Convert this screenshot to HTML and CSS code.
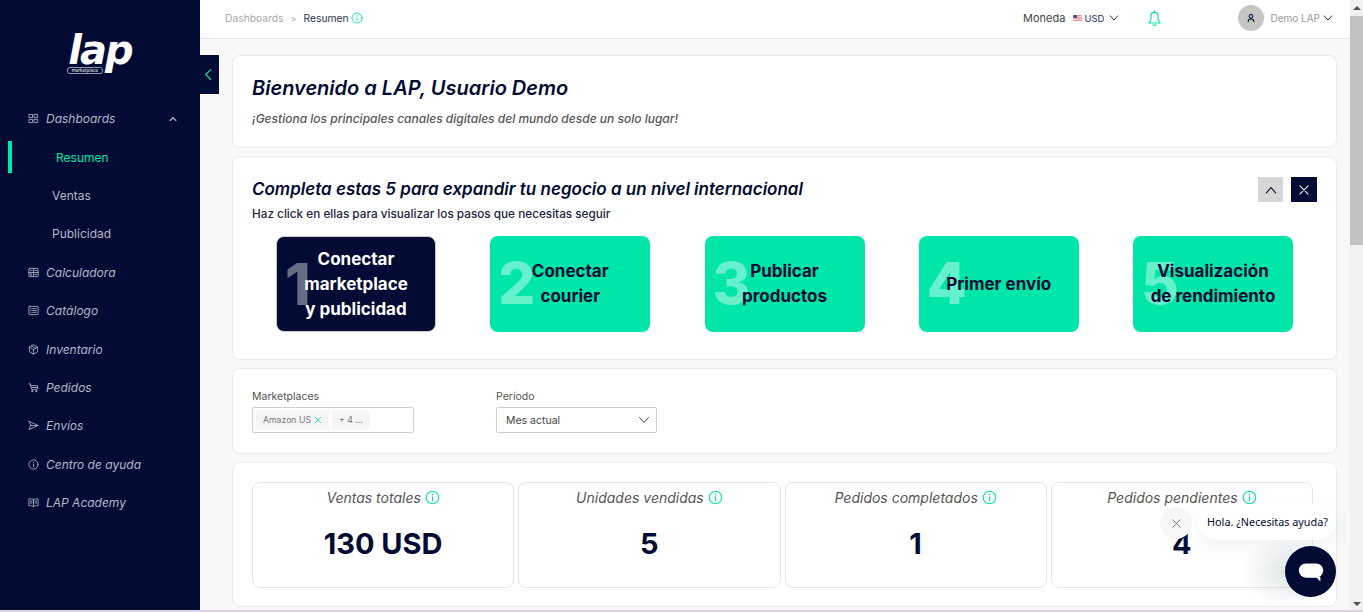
FILE: index.html
```html
<!DOCTYPE html>
<html lang="es">

<head>
    <meta charset="UTF-8">
    <meta name="viewport" content="width=device-width, initial-scale=1.0">
    <title>LAP - Resumen</title>

    <link rel="stylesheet" href="styles.css">
</head>

<body>
    <svg class="defs" width="0" height="0">
        <symbol id="info" viewBox="0 0 24 24"><circle cx="12" cy="12" r="10"/><path d="M12 11v6M12 7v1"/></symbol>
        <symbol id="chev" viewBox="0 0 24 24"><path d="M3 7l9 10 9-10"/></symbol>
    </svg>

    <aside class="sidebar">
        <div class="logo">
            <div class="logo-text">lap</div>
            <div class="logo-sub">marketplace</div>
        </div>
        <nav class="menu">
            <div class="item">
                <svg class="ico" viewBox="0 0 24 24"><rect x="3" y="3" width="7" height="7"/><rect x="14" y="3" width="7" height="7"/><rect x="3" y="14" width="7" height="7"/><rect x="14" y="14" width="7" height="7"/></svg>
                <span>Dashboards</span>
                <svg class="caret" viewBox="0 0 24 24"><path d="M5 16l7-7 7 7"/></svg>
            </div>
            <div class="sub active">Resumen</div>
            <div class="sub">Ventas</div>
            <div class="sub">Publicidad</div>
            <div class="item">
                <svg class="ico" viewBox="0 0 24 24"><rect x="2" y="3" width="20" height="18" rx="1"/><path d="M2 12h20M12 3v18M5 7.500h4M15 7.500h4M15 16.500h4M5 15l3 3M8 15l-3 3"/></svg>
                <span>Calculadora</span>
            </div>
            <div class="item">
                <svg class="ico" viewBox="0 0 24 24"><rect x="2" y="3" width="20" height="18" rx="1"/><path d="M10 8h8M10 12h8M10 16h8M6 8h1M6 12h1M6 16h1"/></svg>
                <span>Catálogo</span>
            </div>
            <div class="item">
                <svg class="ico" viewBox="0 0 24 24"><path d="M12 2l9 5v10l-9 5-9-5V7zM3 7l9 5 9-5M12 12v10M7.500 4.500l9 5"/></svg>
                <span>Inventario</span>
            </div>
            <div class="item">
                <svg class="ico" viewBox="0 0 24 24"><path d="M2 4h3l3 12h12l1-8H6M8 12h13"/><circle cx="9" cy="20" r="1.500"/><circle cx="18" cy="20" r="1.500"/></svg>
                <span>Pedidos</span>
            </div>
            <div class="item">
                <svg class="ico" viewBox="0 0 24 24"><path d="M2 3l20 9-20 9 4-9zM6 12h16"/></svg>
                <span>Envíos</span>
            </div>
            <div class="item">
                <svg class="ico" viewBox="0 0 24 24"><circle cx="12" cy="12" r="10"/><path d="M12 11v6M12 7v1"/></svg>
                <span>Centro de ayuda</span>
            </div>
            <div class="item">
                <svg class="ico" viewBox="0 0 24 24"><path d="M12 6c-2-2-6-2-10-2v15c4 0 8 0 10 2 2-2 6-2 10-2V4c-4 0-8 0-10 2zM12 6v15M5 9h4M5 13h4M15 9h4M15 13h4"/></svg>
                <span>LAP Academy</span>
            </div>
        </nav>
    </aside>

    <div class="toggle">
        <svg viewBox="0 0 24 24"><path d="M16 3l-9 9 9 9"/></svg>
    </div>

    <div class="page">
        <header class="topbar">
            <div class="crumbs">
                <span class="crumb-off">Dashboards</span>
                <span class="crumb-sep">&gt;</span>
                <span class="crumb-on">Resumen</span>
                <svg class="info small"><use href="#info"/></svg>
            </div>
            <div class="currency">
                <span class="cur-label">Moneda</span>
                <svg class="flag" viewBox="0 0 10 7"><rect width="10" height="7" fill="#e8808c"/><path d="M0 1.500h10M0 3.500h10M0 5.500h10"/><rect width="4.500" height="3.500" fill="#4a5590"/></svg>
                <span class="cur-code">USD</span>
                <svg class="chev"><use href="#chev"/></svg>
            </div>
            <svg class="bell" viewBox="0 0 24 24"><path d="M4 19c2-2 3-3 3-6V9a5 5 0 0 1 10 0v4c0 3 1 4 3 6zM10 22h4M12 4V2"/></svg>
            <div class="user">
                <div class="avatar">
                    <svg viewBox="0 0 24 24"><circle cx="12" cy="8" r="4.500"/><path d="M5 21c0-9 14-9 14 0"/></svg>
                </div>
                <span class="user-name">Demo LAP</span>
                <svg class="chev"><use href="#chev"/></svg>
            </div>
        </header>

        <main class="content">
            <section class="card welcome">
                <h1>Bienvenido a LAP, Usuario Demo</h1>
                <p>¡Gestiona los principales canales digitales del mundo desde un solo lugar!</p>
            </section>

            <section class="card steps">
                <div class="steps-head">
                    <div>
                        <h2>Completa estas 5 para expandir tu negocio a un nivel internacional</h2>
                        <p>Haz click en ellas para visualizar los pasos que necesitas seguir</p>
                    </div>
                    <div class="steps-btns">
                        <div class="sq-btn up"><svg viewBox="0 0 24 24"><path d="M4 17l8-9 8 9"/></svg></div>
                        <div class="sq-btn close"><svg viewBox="0 0 24 24"><path d="M5 5l14 14M19 5L5 19"/></svg></div>
                    </div>
                </div>
                <div class="step-row">
                    <div class="step dark"><span class="num">1</span><span class="lbl">Conectar<br>marketplace<br>y publicidad</span></div>
                    <div class="step"><span class="num">2</span><span class="lbl">Conectar<br>courier</span></div>
                    <div class="step"><span class="num">3</span><span class="lbl">Publicar<br>productos</span></div>
                    <div class="step"><span class="num">4</span><span class="lbl">Primer envío</span></div>
                    <div class="step"><span class="num">5</span><span class="lbl">Visualización<br>de rendimiento</span></div>
                </div>
            </section>

            <section class="card filters">
                <div class="field market">
                    <label>Marketplaces</label>
                    <div class="box">
                        <span class="tag">Amazon US <svg viewBox="0 0 24 24"><path d="M4 4l16 16M20 4L4 20"/></svg></span>
                        <span class="tag">+ 4 ...</span>
                    </div>
                </div>
                <div class="field period">
                    <label>Período</label>
                    <div class="box select">
                        <span>Mes actual</span>
                        <svg class="chev"><use href="#chev"/></svg>
                    </div>
                </div>
            </section>

            <section class="card stats">
                <div class="stat">
                    <div class="stat-title">Ventas totales <svg class="info"><use href="#info"/></svg></div>
                    <div class="stat-value">130 USD</div>
                </div>
                <div class="stat">
                    <div class="stat-title">Unidades vendidas <svg class="info"><use href="#info"/></svg></div>
                    <div class="stat-value">5</div>
                </div>
                <div class="stat">
                    <div class="stat-title">Pedidos completados <svg class="info"><use href="#info"/></svg></div>
                    <div class="stat-value">1</div>
                </div>
                <div class="stat">
                    <div class="stat-title">Pedidos pendientes <svg class="info"><use href="#info"/></svg></div>
                    <div class="stat-value">4</div>
                </div>
            </section>
        </main>
    </div>

    <div class="scrollbar">
        <div class="arrow-up"></div>
        <div class="thumb"></div>
        <div class="track"></div>
        <div class="arrow-down"></div>
    </div>

    <div class="chat">
        <div class="chat-glow"></div>
        <div class="chat-x"><svg viewBox="0 0 24 24"><path d="M5 5l14 14M19 5L5 19"/></svg></div>
        <div class="chat-msg">Hola. ¿Necesitas ayuda?</div>
        <div class="chat-btn">
            <svg viewBox="0 0 32 32"><rect x="3" y="7" width="26" height="15" rx="7.500" fill="#fff"/><path d="M21 21h5v5z" fill="#fff"/></svg>
        </div>
    </div>
</body>

</html>
```

FILE: styles.css
```css
* {
    box-sizing: border-box;
}

html,
body {
    height: 100%;
    margin: 0;
}

body {
    display: flex;
    overflow: hidden;
    position: relative;
    font-family: "Inter", "Liberation Sans", sans-serif;
    color: #010b33;
    background-color: #f8f8f8;
}

/* thin line along the bottom of the window */
body::after {
    content: "";
    position: absolute;
    left: 0;
    right: 0;
    bottom: 0;
    height: 2px;
    background-color: #e2d3e4;
}

svg {
    fill: none;
    stroke: currentColor;
    stroke-linecap: round;
    stroke-linejoin: round;
}

.defs {
    position: absolute;
}

/* sidebar */
.sidebar {
    width: 200px;
    flex-shrink: 0;
    background-color: #010b33;
    color: #b4b8c8;
}

.logo {
    height: 99.600px;
    padding-top: 35px;
    display: flex;
    flex-direction: column;
    align-items: center;
    color: #fff;
}

.logo-text {
    font-family: "DejaVu Sans", sans-serif;
    font-size: 40px;
    line-height: 30px;
    font-weight: 700;
    font-style: italic;
    letter-spacing: -2px;
}

.logo-sub {
    font-size: 4.500px;
    line-height: 5px;
    margin-left: -30px;
    margin-top: 2px;
    padding: 0 4px;
    border: 1px solid #99a;
    border-radius: 3px;
}

.item,
.sub {
    height: 38.400px;
    display: flex;
    align-items: center;
    font-size: 12px;
}

.item {
    padding-left: 28px;
    font-style: italic;
}

.ico {
    width: 11px;
    height: 11px;
    margin-right: 7px;
    stroke-width: 1.800;
}

.caret {
    width: 10px;
    height: 10px;
    margin-left: auto;
    margin-right: 22px;
    stroke-width: 3;
}

.sub {
    padding-left: 52px;
}

.sub.active {
    padding-left: 56px;
    color: #00e6a8;
    position: relative;
}

.sub.active::before {
    content: "";
    position: absolute;
    left: 8px;
    top: 3px;
    width: 4px;
    height: 32px;
    background-color: #00e6a8;
}

.toggle {
    position: absolute;
    left: 200px;
    top: 55px;
    width: 19px;
    height: 39px;
    background-color: #010b33;
    color: #00e6a8;
    display: flex;
    align-items: center;
    justify-content: center;
}

.toggle svg {
    width: 13px;
    height: 13px;
    margin-left: -3px;
    stroke-width: 2.200;
}

/* header */
.page {
    flex: 1;
    min-width: 0;
    display: flex;
    flex-direction: column;
}

.topbar {
    height: 39px;
    flex-shrink: 0;
    background-color: #fff;
    border-bottom: 1px solid #e8e8e8;
    display: flex;
    align-items: center;
    padding: 0 17px 2px 25px;
    font-size: 10.300px;
}

.crumbs {
    display: flex;
    align-items: center;
    flex: 1;
}

.crumb-off {
    color: #aaa;
}

.crumb-sep {
    color: #aaa;
    margin: 0 7px;
    font-size: 9px;
}

.crumb-on {
    color: #2b3358;
}

.info {
    width: 15px;
    height: 15px;
    color: #00e6a8;
    stroke-width: 1.800;
    vertical-align: -2px;
}

.info.small {
    width: 12px;
    height: 12px;
    margin-left: 2px;
}

.currency {
    display: flex;
    align-items: center;
}

.cur-label {
    font-size: 11px;
    color: #444;
}

.flag {
    width: 9px;
    height: 6px;
    margin: 0 2px 0 8px;
    stroke: #fbe4e6;
    stroke-width: 1;
}

.flag rect {
    stroke: none;
}

.cur-code {
    font-size: 9.500px;
    color: #2b3358;
}

.chev {
    width: 10px;
    height: 10px;
    margin-left: 5px;
    stroke-width: 2;
}

.bell {
    width: 17px;
    height: 18px;
    margin: 0 75px 0 27px;
    color: #00e6a8;
    stroke-width: 1.600;
}

.user {
    display: flex;
    align-items: center;
}

.user .chev {
    margin-left: 3px;
}

.avatar {
    width: 26px;
    height: 26px;
    border-radius: 50%;
    background-color: #c6c6c6;
    display: flex;
    align-items: center;
    justify-content: center;
    margin-right: 6px;
}

.avatar svg {
    width: 10px;
    height: 10px;
    stroke-width: 2.500;
}

.user-name {
    color: #999;
    font-size: 10px;
}

/* content */
.content {
    flex: 1;
    padding: 16px 13px 0 32px;
    display: flex;
    flex-direction: column;
    gap: 8px;
    min-height: 0;
}

.card {
    background-color: #fff;
    border: 1px solid #ebebeb;
    border-radius: 8px;
    padding: 0 19px;
}

.welcome {
    height: 93px;
    padding-top: 19px;
}

h1 {
    margin: 0 0 10px;
    font-size: 20px;
    line-height: 26px;
    font-weight: 600;
    font-style: italic;
}

.welcome p {
    margin: 0;
    font-size: 12px;
    line-height: 16px;
    font-style: italic;
    font-weight: 500;
    color: #555;
}

.steps {
    height: 204px;
    padding-top: 20px;
}

.steps-head {
    display: flex;
    justify-content: space-between;
    height: 59px;
}

h2 {
    margin: 0;
    font-size: 17px;
    line-height: 24px;
    font-weight: 600;
    font-style: italic;
}

.steps-head p {
    margin: 5px 0 0;
    font-size: 11.750px;
    line-height: 16px;
    font-weight: 500;
    color: #1c2444;
}

.steps-btns {
    display: flex;
    gap: 8px;
}

.sq-btn {
    width: 25px;
    height: 25px;
    display: flex;
    align-items: center;
    justify-content: center;
}

.sq-btn svg {
    width: 14px;
    height: 14px;
    stroke-width: 1.800;
}

.sq-btn.up {
    background-color: #d6d6d6;
}

.sq-btn.close {
    width: 26px;
    background-color: #010b33;
    color: #fff;
}

.step-row {
    display: flex;
    justify-content: space-between;
    padding: 0 24px;
}

.step {
    width: 160px;
    height: 96px;
    border-radius: 8px;
    background-color: #00e6a8;
    position: relative;
    display: flex;
    align-items: center;
    justify-content: center;
    padding: 0 8px;
    text-align: center;
}

.step.dark {
    background-color: #010b33;
    color: #fff;
    border: 1px solid #c8c8d0;
}

.num {
    position: absolute;
    left: 8px;
    top: 12px;
    font-size: 58px;
    line-height: 70px;
    font-weight: 800;
    color: #fff;
    opacity: 0.4;
}

.lbl {
    position: relative;
    font-size: 17px;
    line-height: 25px;
    font-weight: 700;
    white-space: nowrap;
}

.filters {
    height: 86px;
    padding-top: 20px;
    display: flex;
    gap: 82px;
}

.field label {
    display: block;
    font-size: 10.500px;
    line-height: 16px;
    color: #555;
    margin-bottom: 2px;
}

.box {
    height: 26px;
    border: 1px solid #d0d0d0;
    border-radius: 2px;
    display: flex;
    align-items: center;
    gap: 3px;
    padding: 0 3px;
}

.market .box {
    width: 162px;
}

.tag {
    height: 20px;
    padding: 0 7px;
    background-color: #f5f5f5;
    display: flex;
    align-items: center;
    font-size: 8.700px;
    color: #777;
    border-radius: 2px;
}

.tag svg {
    width: 8px;
    height: 8px;
    margin-left: 3px;
    color: #00e6a8;
    stroke-width: 2.500;
}

.select {
    width: 161px;
    justify-content: space-between;
    padding: 0 6px 0 9px;
    font-size: 10.500px;
    color: #444;
}

.select .chev {
    width: 12px;
    height: 12px;
}

.stats {
    flex: 1;
    margin-bottom: 5px;
    padding: 19px 23px 0 19px;
    display: grid;
    grid-template-columns: repeat(4, 1fr);
    gap: 4px;
    align-content: start;
}

.stat {
    height: 106px;
    border: 1px solid #e6e6e6;
    border-radius: 8px;
    text-align: center;
    padding-top: 5px;
}

.stat-title {
    font-size: 14px;
    line-height: 20px;
    font-style: italic;
    color: #555;
}

.stat-value {
    margin-top: 16px;
    font-size: 29px;
    line-height: 40px;
    font-weight: 700;
}

/* fake browser scrollbar */
.scrollbar {
    width: 13px;
    flex-shrink: 0;
    background-color: #f1f1f1;
    display: flex;
    flex-direction: column;
    align-items: center;
}

.arrow-up,
.arrow-down {
    width: 0;
    height: 0;
    border-left: 4px solid transparent;
    border-right: 4px solid transparent;
    margin: 6px 0;
}

.arrow-up {
    border-bottom: 4px solid #505050;
}

.arrow-down {
    border-top: 4px solid #505050;
}

.thumb {
    width: 100%;
    height: 229px;
    background-color: #c1c1c1;
}

.track {
    flex: 1;
}

/* chat widget */
.chat {
    position: absolute;
    right: 0;
    bottom: 0;
    width: 230px;
    height: 130px;
}

.chat-glow {
    position: absolute;
    left: 10px;
    bottom: 5px;
    width: 196px;
    height: 90px;
    background: radial-gradient(closest-side at 75% 60%, rgba(60, 90, 100, 0.16), rgba(60, 90, 100, 0));
}

.chat-x {
    position: absolute;
    left: 27px;
    top: 25px;
    width: 32px;
    height: 32px;
    border-radius: 50%;
    background-color: #f7f7f7;
    color: #666;
    display: flex;
    align-items: center;
    justify-content: center;
}

.chat-x svg {
    width: 13px;
    height: 13px;
    stroke-width: 1.500;
}

.chat-msg {
    position: absolute;
    left: 66px;
    top: 22px;
    width: 137px;
    height: 36px;
    border-radius: 18px;
    background-color: #fff;
    box-shadow: 0 6px 18px rgba(60, 90, 100, 0.08);
    font-family: "Noto Sans", sans-serif;
    font-size: 10.800px;
    line-height: 36px;
    text-align: center;
    white-space: nowrap;
}

.chat-btn {
    position: absolute;
    left: 152px;
    top: 64px;
    width: 51px;
    height: 51px;
    border-radius: 50%;
    background-color: #010b33;
    display: flex;
    align-items: center;
    justify-content: center;
}

.chat-btn svg {
    width: 30px;
    height: 30px;
    stroke: none;
}
```
